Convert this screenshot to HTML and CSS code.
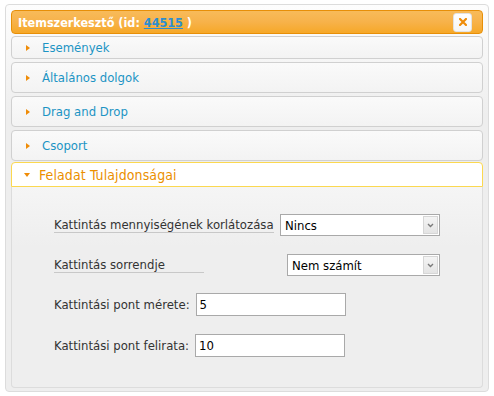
FILE: index.html
```html
<!DOCTYPE html>
<html lang="hu">
<head>
 <meta charset="UTF-8">
 <title>Itemszerkesztő</title>
 <link rel="stylesheet" href="styles.css">
</head>
<body>
 <div class="dialog">
 <div class="titlebar">
 <span class="title">Itemszerkesztő (id: <a href="#" class="item-link">44515</a> )</span>
 <button class="close-btn" type="button" title="Bezárás">
 <svg viewBox="0 0 8 8" width="8" height="8">
 <path d="M1 1 L7 7 M7 1 L1 7" stroke="#ef8c08" stroke-width="2.2" stroke-linecap="square"/>
 </svg>
 </button>
 </div>
 <div class="accordion">
 <h3 class="acc-header acc-first"><span class="acc-icon"></span>Események</h3>
 <h3 class="acc-header"><span class="acc-icon"></span>Általános dolgok</h3>
 <h3 class="acc-header"><span class="acc-icon"></span>Drag and Drop</h3>
 <h3 class="acc-header"><span class="acc-icon"></span>Csoport</h3>
 <h3 class="acc-header acc-active"><span class="acc-icon"></span>Feladat Tulajdonságai</h3>
 <div class="acc-content">
 <div class="form-row row-first">
 <label class="field-label underlined" for="limit">Kattintás mennyiségének korlátozása</label>
 <div class="select-box select-first">
 <select id="limit"><option>Nincs</option></select>
 <span class="select-arrow"><svg viewBox="0 0 7 5" width="7" height="5"><path d="M1 1 L3.5 3.5 L6 1" fill="none" stroke="#7a7a7a" stroke-width="1.4"/></svg></span>
 </div>
 </div>
 <div class="form-row row-second">
 <label class="field-label underlined" for="order">Kattintás sorrendje</label>
 <div class="select-box select-second">
 <select id="order"><option>Nem számít</option></select>
 <span class="select-arrow"><svg viewBox="0 0 7 5" width="7" height="5"><path d="M1 1 L3.5 3.5 L6 1" fill="none" stroke="#7a7a7a" stroke-width="1.4"/></svg></span>
 </div>
 </div>
 <div class="form-row row-text">
 <label class="field-label" for="size">Kattintási pont mérete:</label>
 <input type="text" id="size" class="text-field" value="5">
 </div>
 <div class="form-row row-text">
 <label class="field-label" for="caption">Kattintási pont felirata:</label>
 <input type="text" id="caption" class="text-field" value="10">
 </div>
 </div>
 </div>
 </div>
</body>
</html>
```

FILE: styles.css
```css
* {
 margin: 0;
 padding: 0;
 box-sizing: border-box;
}
body {
 background: #fff;
 font-family: "DejaVu Sans Condensed", "DejaVu Sans", sans-serif;
 font-size: 13px;
 color: #333;
}
.dialog {
 width: 484px;
 height: 388px;
 margin: 4px 0 0 5px;
 padding: 5px;
 border: 1px solid #dcdcdc;
 border-radius: 4px;
 background: linear-gradient(#fdfdfd 0, #eeeeee 110px, #eeeeee 100%);
}
.titlebar {
 height: 24px;
 display: flex;
 align-items: center;
 justify-content: space-between;
 padding: 0 10px 0 6px;
 border: 1px solid #e78f08;
 border-radius: 4px;
 background: linear-gradient(#f8bb5a 0%, #f7b24a 50%, #f6a828 100%);
}
.title {
 color: #fff;
 font-weight: bold;
 font-size: 12.5px;
}
.item-link {
 color: #2c8ed0;
 text-decoration: underline;
}
.close-btn {
 width: 19px;
 height: 19px;
 display: flex;
 align-items: center;
 justify-content: center;
 background: linear-gradient(#fff, #f6f6f6);
 border: 1px solid #e2e2e2;
 border-radius: 3px;
 cursor: pointer;
}
.acc-header {
 height: 31px;
 margin-top: 3px;
 display: flex;
 align-items: center;
 padding-left: 14px;
 border: 1px solid #d0d0d0;
 border-radius: 4px;
 background: linear-gradient(#fafafa, #f3f3f3);
 color: #1c94c4;
 font-size: 13px;
 font-weight: normal;
}
.acc-first {
 height: 23px;
 margin-top: 2px;
}
.acc-icon {
 width: 0;
 height: 0;
 margin-right: 12px;
 border-top: 3px solid transparent;
 border-bottom: 3px solid transparent;
 border-left: 4px solid #ef8c08;
}
.acc-active {
 height: 25px;
 margin-top: 1px;
 padding-left: 12px;
 border-color: #fbd850;
 border-radius: 4px 4px 0 0;
 background: #fff;
 color: #eb8f00;
 font-size: 14px;
 letter-spacing: 0.1px;
}
.acc-active .acc-icon {
 margin-right: 9px;
 border-left: 3.5px solid transparent;
 border-right: 3.5px solid transparent;
 border-top: 4px solid #ef8c08;
 border-bottom: 0;
}
.acc-content {
 height: 201px;
 padding: 27px 0 0 42px;
 border: 1px solid #dcdcdc;
 border-top: 0;
 border-radius: 0 0 4px 4px;
 background: linear-gradient(#f5f5f5 0, #eeeeee 60px, #eeeeee 100%);
}
.form-row {
 display: flex;
 align-items: center;
}
.row-first,
.row-second {
 width: 386px;
 height: 22px;
 justify-content: space-between;
}
.row-first {
 margin-bottom: 18px;
}
.row-second {
 margin-bottom: 17px;
}
.row-text {
 height: 23px;
 margin-bottom: 18px;
}
.field-label {
 color: #333;
 line-height: 15px;
 margin-right: 3px;
}
.row-text .field-label {
 margin-right: 6px;
}
.underlined {
 min-width: 150px;
 border-bottom: 1px solid #c8c8c8;
}
.select-box {
 height: 22px;
 display: flex;
 align-items: center;
 padding: 1px;
 border: 1px solid #a9a9a9;
 background: #fff;
}
.select-first {
 width: 160px;
}
.select-second {
 width: 153px;
}
.select-box select {
 flex: 1;
 height: 18px;
 border: 0;
 outline: none;
 background: transparent;
 appearance: none;
 -webkit-appearance: none;
 font-family: "DejaVu Sans Condensed", "DejaVu Sans", sans-serif;
 font-size: 13px;
 color: #000;
 padding-left: 3px;
}
.select-arrow {
 width: 15px;
 height: 18px;
 display: flex;
 align-items: center;
 justify-content: center;
 border: 1px solid #d6d6d6;
 background: linear-gradient(#f4f4f4, #e4e4e4);
}
.text-field {
 width: 150px;
 height: 23px;
 padding: 0 3px;
 border: 1px solid #a9a9a9;
 background: #fff;
 font-family: "DejaVu Sans Condensed", "DejaVu Sans", sans-serif;
 font-size: 13px;
 color: #000;
}
```
